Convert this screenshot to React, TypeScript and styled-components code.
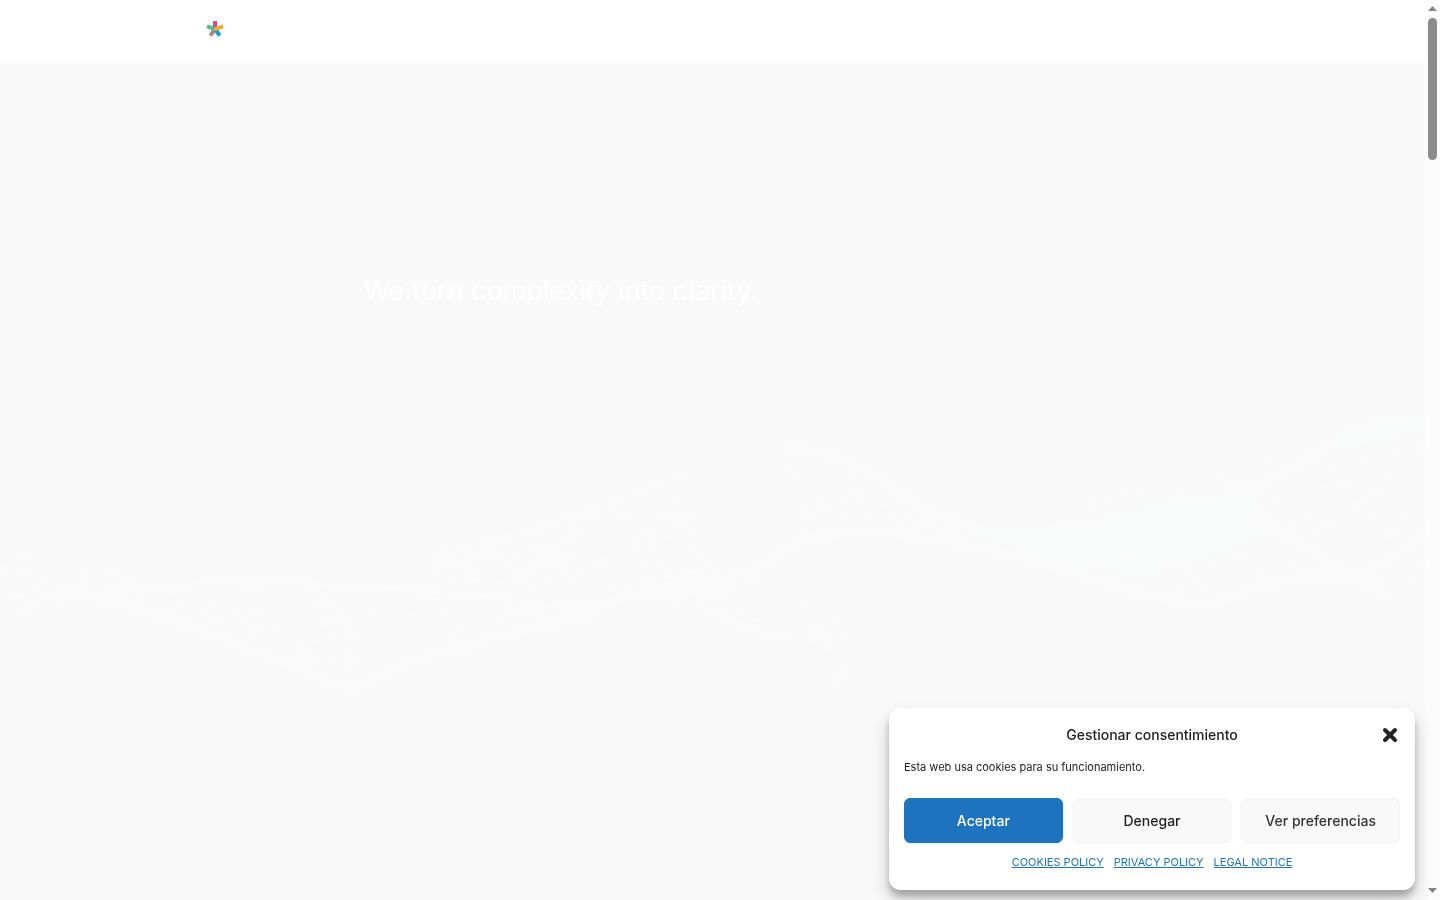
import React from 'react';
import styled, { createGlobalStyle } from 'styled-components';

const GlobalStyle = createGlobalStyle`
  *, *::before, *::after { box-sizing: border-box; }
  body { margin: 0; background: #f9f9f9; font-family: Inter, "Liberation Sans", sans-serif; color: #222; }
`;

const Shell = styled.div`
  display: grid;
  grid-template-columns: minmax(0, 1fr) 15px;
  min-height: 100vh;
`;

const Page = styled.div`
  display: flex;
  flex-direction: column;
`;

const Header = styled.header`
  display: flex;
  align-items: center;
  height: 61px;
  padding: 0 52px;
  background: #fff;
`;

const LogoLink = styled.a`
  display: block;
  height: 36px;
`;

const Hero = styled.main`
  flex: 1;
  display: grid;
  background: #f9f9f9;
  & > * { grid-area: 1 / 1; }
`;

const WaveArt = styled.svg`
  width: 100%;
  height: 100%;
  min-height: 400px;
`;

const HeroCopy = styled.div`
  width: 100%;
  max-width: 698px;
  margin: 0 auto;
  padding-top: 208px;
`;

const HeroTitle = styled.h1`
  margin: 0;
  font-size: 27px;
  line-height: 44px;
  font-weight: 400;
  color: #fff;
`;

const ScrollTrack = styled.div`
  display: flex;
  flex-direction: column;
  align-items: center;
  background: #fcfcfc;
  padding: 6px 0;
`;

const ScrollThumb = styled.div`
  width: 9px;
  height: 142px;
  margin: 6px 0 auto;
  border-radius: 5px;
  background: #8b8b8b;
`;

const Consent = styled.section`
  position: fixed;
  right: 25px;
  bottom: 10px;
  display: grid;
  gap: 10px;
  width: 526px;
  max-width: calc(100vw - 50px);
  padding: 15px 15px 19px;
  border-radius: 12px;
  background: #fff;
  box-shadow: rgba(0, 0, 0, 0.19) 0 10px 20px, rgba(0, 0, 0, 0.23) 0 6px 6px;
`;

const ConsentHeader = styled.div`
  display: grid;
  grid-template-columns: 20px 1fr 20px;
  align-items: center;
  height: 24px;
`;

const ConsentTitle = styled.h2`
  grid-column: 2;
  margin: 0;
  font-size: 14px;
  line-height: 24px;
  font-weight: 500;
  text-align: center;
`;

const CloseButton = styled.button`
  display: flex;
  padding: 0;
  border: 0;
  background: none;
  color: #222;
  cursor: pointer;
`;

const Message = styled.p`
  margin: 0 0 10px;
  font-size: 11px;
  line-height: 21px;
`;

const Actions = styled.div`
  display: grid;
  grid-template-columns: repeat(3, 1fr);
  gap: 10px;
`;

const ActionButton = styled.button<{ $primary?: boolean; $muted?: boolean }>`
  height: 45px;
  padding: 0 10px;
  border: 1px solid ${p => (p.$primary ? '#1e73be' : '#f2f2f2')};
  border-radius: 6px;
  background: ${p => (p.$primary ? '#1e73be' : '#f9f9f9')};
  color: ${p => (p.$primary ? '#fff' : p.$muted ? '#333' : '#222')};
  font: 500 14px/24px Inter, "Liberation Sans", sans-serif;
  cursor: pointer;
`;

const Links = styled.nav`
  display: flex;
  justify-content: center;
  gap: 10px;
  font-size: 11px;
  line-height: 18px;
`;

const PolicyLink = styled.a`
  color: #1e73be;
`;

const Logo = () => (
  <svg width="200" height="36" viewBox="0 0 200 36" fill="none" aria-hidden="true">
    <g strokeWidth="4" transform="translate(163 16)">
      <path d="M0 0L-4.7 6.5" stroke="#a08c88" />
      <path d="M0 0L-8-2.6" stroke="#4fbd96" />
      <path d="M0 0L4.7 6.5" stroke="#189bd0" />
      <path d="M0 0V-8" stroke="#d8488c" />
      <path d="M-1 0.4L8-2.6" stroke="#f5a93b" />
    </g>
  </svg>
);

type Band = { from: number; to: number; top: [number, number]; bottom: [number, number]; count: number };

/* Each band scatters particles between a sloping top edge and a sloping bottom edge. */
const bands: Band[] = [
  { from: 0, to: 130, top: [545, 575], bottom: [630, 600], count: 60 },
  { from: 100, to: 350, top: [582, 580], bottom: [600, 692], count: 150 },
  { from: 350, to: 600, top: [580, 610], bottom: [692, 610], count: 90 },
  { from: 430, to: 690, top: [555, 470], bottom: [580, 590], count: 150 },
  { from: 640, to: 850, top: [520, 620], bottom: [590, 690], count: 80 },
  { from: 780, to: 960, top: [446, 515], bottom: [530, 540], count: 70 },
  { from: 1080, to: 1425, top: [490, 430], bottom: [590, 590], count: 190 },
];

const particles = (() => {
  let seed = 17;
  const random = () => {
    seed = (seed * 16807) % 2147483647;
    return seed / 2147483647;
  };
  return bands.flatMap(({ from, to, top, bottom, count }) =>
    Array.from({ length: count }, () => {
      const t = random();
      const upper = top[0] + (top[1] - top[0]) * t;
      const lower = bottom[0] + (bottom[1] - bottom[0]) * t;
      return {
        x: Math.round(from + (to - from) * t),
        y: Math.round(upper + (lower - upper) * random()),
        w: 5 + Math.round(random() * 9),
      };
    })
  );
})();

const Waves = () => (
  <WaveArt viewBox="0 61 1425 839" preserveAspectRatio="none" fill="none" stroke="#fafafa" strokeLinejoin="round" aria-hidden="true">
    <path d="M20 612Q60 580 110 598T230 642T350 690Q410 658 480 642T600 606T700 582T800 540Q860 526 940 540T1110 584T1240 594T1330 575T1425 530" strokeWidth="8" />
    <path d="M100 595Q200 574 390 588T520 610T620 600T720 592T790 640" strokeWidth="5" />
    <path d="M430 555L500 540L600 508L690 472" strokeWidth="8" strokeDasharray="18 5" />
    <path d="M780 446Q850 452 900 492T1000 532T1160 520Q1260 490 1320 450T1425 424" strokeWidth="9" />
    <path d="M960 526L1060 534L1160 504L1250 498L1280 528L1220 550L1150 575L1050 560Z" fill="#f9fbfa" stroke="none" />
    <path d="M1340 442L1425 422" stroke="#f9fbfa" strokeWidth="12" />
    <path d="M1250 515L1310 550L1390 598" strokeWidth="10" />
    <g fill="#fafafa" stroke="none">
      {particles.map((p, i) => <rect key={i} x={p.x} y={p.y} width={p.w} height="5" rx="2" />)}
    </g>
  </WaveArt>
);

export default function App() {
  return (
    <>
      <GlobalStyle />
      <Shell>
        <Page>
          <Header>
            <LogoLink href="#" aria-label="Home"><Logo /></LogoLink>
          </Header>
          <Hero>
            <Waves />
            <HeroCopy><HeroTitle>We turn complexity into clarity.</HeroTitle></HeroCopy>
          </Hero>
        </Page>
        <ScrollTrack aria-hidden="true">
          <svg width="9" height="6" viewBox="0 0 9 6"><path d="M0 5L4.5 0L9 5Z" fill="#858585" /></svg>
          <ScrollThumb />
          <svg width="9" height="6" viewBox="0 0 9 6"><path d="M0 0L4.5 5L9 0Z" fill="#858585" /></svg>
        </ScrollTrack>
      </Shell>
      <Consent role="dialog" aria-labelledby="consent-title">
        <ConsentHeader>
          <ConsentTitle id="consent-title">Gestionar consentimiento</ConsentTitle>
          <CloseButton type="button" aria-label="Cerrar">
            <svg width="20" height="20" viewBox="0 0 20 20"><path d="M5 5L15 15M15 5L5 15" stroke="currentColor" strokeWidth="4" strokeLinecap="round" /></svg>
          </CloseButton>
        </ConsentHeader>
        <Message>Esta web usa cookies para su funcionamiento.</Message>
        <Actions>
          <ActionButton type="button" $primary>Aceptar</ActionButton>
          <ActionButton type="button">Denegar</ActionButton>
          <ActionButton type="button" $muted>Ver preferencias</ActionButton>
        </Actions>
        <Links aria-label="Legal">
          <PolicyLink href="#cookies">COOKIES POLICY</PolicyLink>
          <PolicyLink href="#privacy">PRIVACY POLICY</PolicyLink>
          <PolicyLink href="#legal">LEGAL NOTICE</PolicyLink>
        </Links>
      </Consent>
    </>
  );
}
